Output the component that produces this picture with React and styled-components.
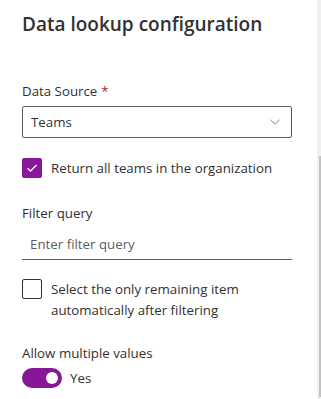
import styled, { createGlobalStyle } from "styled-components";

const Global = createGlobalStyle`
  body {
    margin: 0;
    background: #ffffff;
    font-family: "Open Sans", "Noto Sans", sans-serif;
    color: #323130;
  }
`;

const Page = styled.div`
  display: flex;
  height: 399px;
  width: 321px;
  overflow: hidden;
`;

const Panel = styled.div`
  flex: 1;
  padding: 10px 25px 0 22px;
  display: flex;
  flex-direction: column;
`;

const Title = styled.h1`
  margin: 0;
  font-size: 19px;
  font-weight: 600;
  line-height: 28px;
  color: #323130;
`;

const Field = styled.div`
  display: flex;
  flex-direction: column;
  margin-top: ${(p) => p.$gap || 0}px;
`;

const Label = styled.label`
  font-size: 13.3px;
  line-height: 20px;
  padding: 0 0 5px;
  color: #323130;
`;

const Required = styled.span`
  color: #a4262c;
  padding-left: 4px;
`;

const Dropdown = styled.div`
  height: 32px;
  box-sizing: border-box;
  border: 1px solid #605e5c;
  border-radius: 2px;
  display: flex;
  align-items: center;
  justify-content: space-between;
  padding: 0 11px 0 8px;
  font-size: 13.3px;
`;

const Underline = styled.div`
  height: 32px;
  box-sizing: border-box;
  border-bottom: 1px solid #605e5c;
  display: flex;
  align-items: center;
  padding: 0 8px;
  font-size: 13.3px;
  color: #605e5c;
`;

const CheckRow = styled.div`
  display: flex;
  align-items: flex-start;
  gap: 9px;
  margin-top: ${(p) => p.$gap || 0}px;
  font-size: 13.3px;
  line-height: 21px;
`;

const Box = styled.div`
  width: 20px;
  height: 20px;
  flex: none;
  box-sizing: border-box;
  border-radius: 2px;
  border: 1px solid ${(p) => (p.$on ? "#881798" : "#323130")};
  background: ${(p) => (p.$on ? "#881798" : "#ffffff")};
  display: flex;
  align-items: center;
  justify-content: center;
`;

const ToggleRow = styled.div`
  display: flex;
  align-items: center;
  gap: 8px;
  font-size: 13.3px;
`;

const Track = styled.div`
  width: 40px;
  height: 20px;
  border-radius: 10px;
  background: #881798;
  display: flex;
  align-items: center;
  justify-content: flex-end;
  padding: 0 4px;
  box-sizing: border-box;
`;

const Knob = styled.div`
  width: 12px;
  height: 12px;
  border-radius: 50%;
  background: #ffffff;
`;

const Scroll = styled.div`
  width: 4px;
  background: #f0f0f0;
  display: flex;
  justify-content: flex-end;
`;

const Thumb = styled.div`
  width: 2px;
  height: 241px;
  margin-top: 156px;
  background: #c2c2c2;
`;

const Check = () => (
  <svg width="12" height="10" viewBox="0 0 12 10">
    <path d="M1.5 5.2 L4.5 8 L10.5 2" fill="none" stroke="#fff" strokeWidth="1.3" />
  </svg>
);

const Chevron = () => (
  <svg width="10" height="6" viewBox="0 0 10 6">
    <path d="M0.5 0.8 L5 5.2 L9.5 0.8" fill="none" stroke="#8a8886" strokeWidth="1" />
  </svg>
);

export default function App() {
  return (
    <Page>
      <Global />
      <Panel>
        <Title>Data lookup configuration</Title>
        <Field $gap={43}>
          <Label>
            Data Source<Required>*</Required>
          </Label>
          <Dropdown>
            <span>Teams</span>
            <Chevron />
          </Dropdown>
        </Field>
        <CheckRow $gap={20}>
          <Box $on>
            <Check />
          </Box>
          <span>Return all teams in the organization</span>
        </CheckRow>
        <Field $gap={24}>
          <Label>Filter query</Label>
          <Underline>Enter filter query</Underline>
        </Field>
        <CheckRow $gap={19}>
          <Box />
          <span>
            Select the only remaining item
            <br />
            automatically after filtering
          </span>
        </CheckRow>
        <Field $gap={22}>
          <Label>Allow multiple values</Label>
          <ToggleRow>
            <Track>
              <Knob />
            </Track>
            <span>Yes</span>
          </ToggleRow>
        </Field>
      </Panel>
      <Scroll>
        <Thumb />
      </Scroll>
    </Page>
  );
}
